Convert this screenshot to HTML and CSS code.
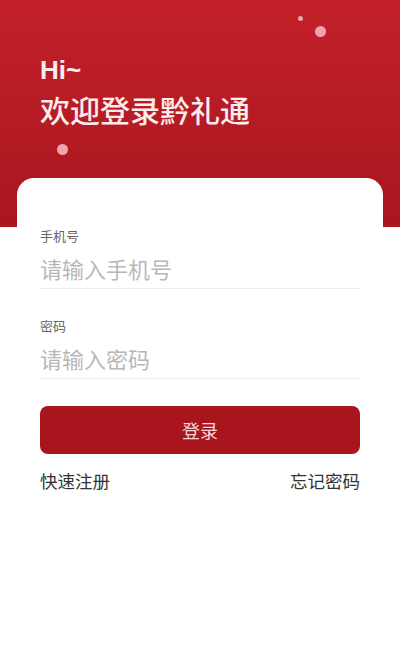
FILE: index.html
```
<!DOCTYPE html>
<html lang="zh-CN">
<head>
  <meta charset="UTF-8">
  <title>登录 - 黔礼通</title>
  <link rel="stylesheet" href="styles.css">
</head>
<body>
  <div class="page">
    <div class="header">
      <span class="dot dot-small"></span>
      <span class="dot dot-top"></span>
      <span class="dot dot-left"></span>
      <div class="hi">Hi~</div>
      <div class="welcome">欢迎登录黔礼通</div>
    </div>
    <div class="login-card">
      <div class="field">
        <div class="field-label">手机号</div>
        <input class="field-input" type="tel" placeholder="请输入手机号">
      </div>
      <div class="field">
        <div class="field-label">密码</div>
        <input class="field-input" type="password" placeholder="请输入密码">
      </div>
      <button class="login-button">登录</button>
      <div class="links">
        <a href="#">快速注册</a>
        <a href="#">忘记密码</a>
      </div>
    </div>
  </div>
</body>
</html>
```

FILE: styles.css
```
body {
  margin: 0;
  background: #fff;
  font-family: "Noto Sans CJK SC", "Noto Sans", sans-serif;
}
.page {
  width: 400px;
  height: 650px;
  overflow: hidden;
  background: #fff;
}
.header {
  position: relative;
  height: 227px;
  box-sizing: border-box;
  padding: 55px 0 0 40px;
  background: linear-gradient(to bottom, #c3212a, #a9161e);
  color: #fbecee;
}
.dot {
  position: absolute;
  border-radius: 50%;
  background: #f3a3ab;
}
.dot-small { left: 298px; top: 16px; width: 5px; height: 5px; }
.dot-top { left: 315px; top: 26px; width: 11px; height: 11px; }
.dot-left { left: 57px; top: 144px; width: 11px; height: 11px; }
.hi {
  font-family: "Liberation Sans", Arial, sans-serif;
  font-weight: bold;
  font-size: 26px;
  line-height: 31px;
}
.welcome {
  margin-top: 4px;
  font-size: 30px;
  line-height: 38px;
  font-weight: 500;
}
.login-card {
  margin: -49px 17px 0;
  padding: 49px 23px 0;
  background: #fff;
  border-radius: 17px 17px 0 0;
  position: relative;
}
.field {
  margin-bottom: 28px;
}
.field + .field {
  margin-bottom: 27px;
}
.field-label {
  font-size: 13px;
  line-height: 17px;
  color: #666;
}
.field-input {
  display: block;
  width: 100%;
  box-sizing: border-box;
  margin-top: 3px;
  height: 42px;
  padding: 0;
  border: none;
  border-bottom: 1px solid #ececec;
  outline: none;
  font-family: inherit;
  font-size: 22px;
  color: #333;
  background: transparent;
}
.field-input::placeholder {
  color: #b8b8b8;
}
.login-button {
  display: block;
  width: 100%;
  height: 48px;
  border: none;
  border-radius: 8px;
  background: #a8151d;
  color: #f7d8da;
  font-family: inherit;
  font-size: 18px;
  cursor: pointer;
}
.links {
  display: flex;
  justify-content: space-between;
  margin-top: 15px;
}
.links a {
  font-size: 17.5px;
  line-height: 24px;
  color: #333;
  text-decoration: none;
}
```
